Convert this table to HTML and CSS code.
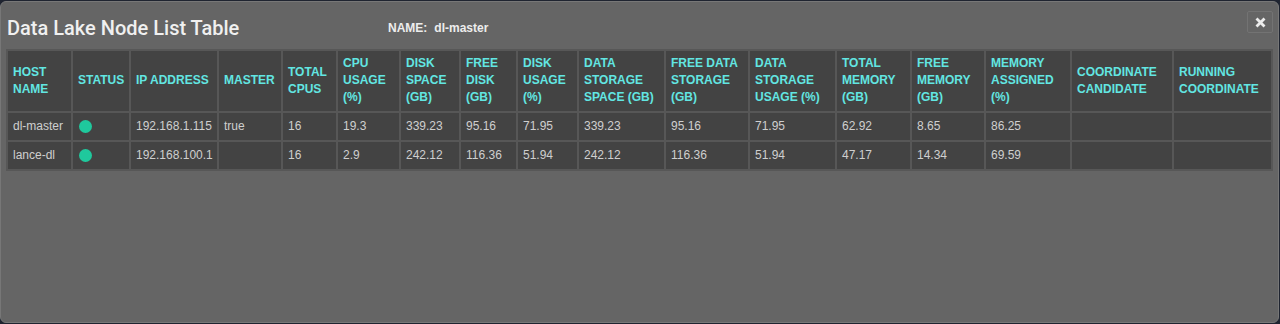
FILE: index.html
```html
<!DOCTYPE html>
<html>
<head>
<meta charset="utf-8">
<link rel="stylesheet" href="styles.css">
</head>
<body>
<div class="dialog">
  <div class="head">
    <h1 class="title">Data Lake Node List Table</h1>
    <div class="name"><span class="name-label">NAME:</span><span class="name-val">dl-master</span></div>
    <button class="close" aria-label="close">
      <svg width="11" height="11" viewBox="0 0 11 11"><path d="M1.5 1.5 L9.5 9.5 M9.5 1.5 L1.5 9.5" stroke="#ececec" stroke-width="2.8" stroke-linecap="butt"/></svg>
    </button>
  </div>
  <table class="grid">
    <colgroup>
      <col class="w1"><col class="w2"><col class="w3"><col class="w4"><col class="w5"><col class="w6"><col class="w7"><col class="w8"><col class="w9"><col class="w10"><col class="w11"><col class="w12"><col class="w13"><col class="w14"><col class="w15"><col class="w16"><col class="w17">
    </colgroup>
    <thead>
      <tr>
        <th>HOST<br>NAME</th>
        <th>STATUS</th>
        <th>IP ADDRESS</th>
        <th>MASTER</th>
        <th>TOTAL<br>CPUS</th>
        <th>CPU<br>USAGE<br>(%)</th>
        <th>DISK<br>SPACE<br>(GB)</th>
        <th>FREE<br>DISK<br>(GB)</th>
        <th>DISK<br>USAGE<br>(%)</th>
        <th>DATA<br>STORAGE<br>SPACE (GB)</th>
        <th>FREE DATA<br>STORAGE<br>(GB)</th>
        <th>DATA<br>STORAGE<br>USAGE (%)</th>
        <th>TOTAL<br>MEMORY<br>(GB)</th>
        <th>FREE<br>MEMORY<br>(GB)</th>
        <th>MEMORY<br>ASSIGNED<br>(%)</th>
        <th>COORDINATE<br>CANDIDATE</th>
        <th>RUNNING<br>COORDINATE</th>
      </tr>
    </thead>
    <tbody>
      <tr>
        <td>dl-master</td>
        <td><span class="dot"></span></td>
        <td>192.168.1.115</td>
        <td>true</td>
        <td>16</td>
        <td>19.3</td>
        <td>339.23</td>
        <td>95.16</td>
        <td>71.95</td>
        <td>339.23</td>
        <td>95.16</td>
        <td>71.95</td>
        <td>62.92</td>
        <td>8.65</td>
        <td>86.25</td>
        <td></td>
        <td></td>
      </tr>
      <tr>
        <td>lance-dl</td>
        <td><span class="dot"></span></td>
        <td>192.168.100.1</td>
        <td></td>
        <td>16</td>
        <td>2.9</td>
        <td>242.12</td>
        <td>116.36</td>
        <td>51.94</td>
        <td>242.12</td>
        <td>116.36</td>
        <td>51.94</td>
        <td>47.17</td>
        <td>14.34</td>
        <td>69.59</td>
        <td></td>
        <td></td>
      </tr>
    </tbody>
  </table>
</div>
</body>
</html>
```
FILE: styles.css
```css
html, body {
  margin: 0;
  padding: 0;
  background: #1f2430;
  height: 324px;
  overflow: hidden;
}
.dialog {
  box-sizing: border-box;
  margin: 1px 1px 0 0;
  height: 322px;
  background: #656565;
  border: 1px solid #777777;
  border-radius: 6px;
  padding: 0 5px 0 5px;
  font-family: "Liberation Sans", Arial, sans-serif;
}
.head {
  display: flex;
  align-items: flex-start;
  height: 47px;
}
.title {
  margin: 14px 0 0 1px;
  font-family: Roboto, "Liberation Sans", sans-serif;
  font-weight: 500;
  font-size: 20px;
  line-height: 24px;
  color: #f0f0f0;
  width: 381px;
  flex: none;
}
.name {
  margin-top: 19px;
  font-size: 12px;
  font-weight: bold;
  color: #ededed;
  line-height: 14px;
}
.name-label {
  margin-right: 7px;
}
.close {
  margin: 9px 0 0 auto;
  width: 26px;
  height: 22px;
  background: transparent;
  border: 1px solid #737373;
  border-radius: 2px;
  padding: 0;
  display: flex;
  align-items: center;
  justify-content: center;
  cursor: pointer;
}
.grid {
  border-collapse: collapse;
  table-layout: fixed;
  width: 1265px;
  background: #434343;
  border: 2px solid #575757;
  font-size: 12px;
}
.grid th, .grid td {
  border: 2px solid #575757;
  text-align: left;
  vertical-align: middle;
  padding: 5px 4px 5px 5px;
  line-height: 17px;
  overflow: hidden;
  white-space: nowrap;
}
.grid th {
  color: #62e6e2;
  font-weight: bold;
  padding-top: 4px;
  padding-bottom: 5px;
}
.grid td {
  color: #cfcfcf;
  padding-top: 5px;
  padding-bottom: 5px;
}
.dot {
  display: block;
  width: 13px;
  height: 13px;
  border-radius: 50%;
  background: #1fc99d;
  margin-left: 1px;
}
.w1 { width: 65px; }
.w2 { width: 58px; }
.w3 { width: 88px; }
.w4 { width: 64px; }
.w5 { width: 55px; }
.w6 { width: 63px; }
.w7 { width: 60px; }
.w8 { width: 57px; }
.w9 { width: 61px; }
.w10 { width: 87px; }
.w11 { width: 84px; }
.w12 { width: 87px; }
.w13 { width: 75px; }
.w14 { width: 74px; }
.w15 { width: 86px; }
.w16 { width: 102px; }
.w17 { width: 99px; }
```
